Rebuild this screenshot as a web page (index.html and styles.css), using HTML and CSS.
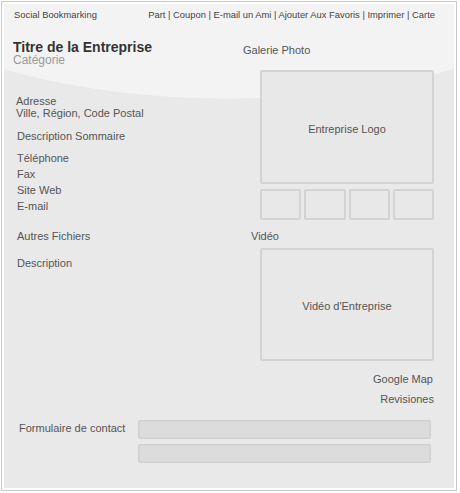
FILE: index.html
```html
<!DOCTYPE html>
<html lang="fr">
<head>
<meta charset="utf-8">
<title>Entreprise</title>
<link rel="stylesheet" href="styles.css">
</head>
<body>
<div class="frame">
  <div class="panel">
    <div class="topbar">
      <span class="social">Social Bookmarking</span>
      <span class="links">Part | Coupon | E-mail un Ami | Ajouter Aux Favoris | Imprimer | Carte</span>
    </div>
    <div class="main">
      <div class="left">
        <div class="title">Titre de la Entreprise</div>
        <div class="category">Catégorie</div>
        <div class="address">Adresse<br>Ville, Région, Code Postal</div>
        <div class="summary">Description Sommaire</div>
        <div class="contact">Téléphone<br>Fax<br>Site Web<br>E-mail</div>
        <div class="files">Autres Fichiers</div>
        <div class="desc">Description</div>
      </div>
      <div class="right">
        <div class="gallery-label">Galerie Photo</div>
        <div class="box logo">Entreprise Logo</div>
        <div class="thumbs">
          <div class="thumb"></div>
          <div class="thumb"></div>
          <div class="thumb"></div>
          <div class="thumb"></div>
        </div>
        <div class="video-label">Vidéo</div>
        <div class="box video">Vidéo d'Entreprise</div>
        <div class="map">Google Map</div>
        <div class="revisions">Revisiones</div>
      </div>
    </div>
    <div class="form">
      <div class="form-label">Formulaire de contact</div>
      <div class="fields">
        <div class="field"></div>
        <div class="field"></div>
      </div>
    </div>
  </div>
</div>
</body>
</html>
```

FILE: styles.css
```css
* { box-sizing: border-box; }
html, body { margin: 0; padding: 0; background: #fff; }
body {
  font-family: "Liberation Sans", Arial, sans-serif;
  color: #555;
  font-size: 11px;
  line-height: 16px;
}
.frame {
  margin: 1px 0 0 1px;
  width: 456px;
  border: 1px solid #c9c9c9;
  padding: 2px;
  background: #fff;
}
.panel {
  height: 484px;
  background-color: #e9e9e9;
  background-image: radial-gradient(400px 170px at 224px -75px, #f3f3f3 99.4%, #e9e9e9 100%);
  display: flex;
  flex-direction: column;
}
.topbar {
  display: flex;
  justify-content: space-between;
  padding: 5px 19px 0 10px;
  font-size: 9.4px;
  line-height: 12px;
  color: #444;
}
.main {
  display: grid;
  grid-template-columns: 1fr 211px;
}
.left { padding-left: 12px; }
.title {
  margin: 19px 0 0 -3px;
  font-size: 14px;
  line-height: 14px;
  font-weight: bold;
  color: #333;
}
.category {
  margin: 1px 0 0 -3px;
  font-size: 12px;
  line-height: 11px;
  color: #999;
}
.address { margin-top: 29px; line-height: 12px; }
.summary { margin: 9px 0 0 1px; }
.contact { margin: 6px 0 0 1px; }
.files { margin: 14px 0 0 1px; }
.desc { margin: 11px 0 0 1px; }

.right { padding-right: 20px; }
.gallery-label { margin-top: 21px; }
.box {
  margin-left: 17px;
  border: 2px solid #d3d3d3;
  border-radius: 2px;
  background: #e8e8e8;
  text-align: center;
}
.logo { margin-top: 12px; height: 114px; padding-top: 49px; }
.thumbs {
  margin: 5px 0 0 17px;
  display: grid;
  grid-template-columns: repeat(4, 1fr);
  gap: 3px;
}
.thumb {
  height: 31px;
  border: 2px solid #d3d3d3;
  border-radius: 2px;
  background: #e8e8e8;
}
.video-label { margin: 8px 0 0 8px; }
.video { margin-top: 4px; height: 113px; padding-top: 48px; }
.map { margin-top: 10px; text-align: right; padding-right: 1px; }
.revisions { margin-top: 4px; text-align: right; }

.form {
  margin-top: 13px;
  display: grid;
  grid-template-columns: 119px 1fr;
  padding: 0 23px 0 15px;
}
.fields { display: flex; flex-direction: column; gap: 5px; }
.field {
  height: 19px;
  border: 1px solid #d0d0d0;
  border-radius: 2px;
  background: #dcdcdc;
  box-shadow: inset 0 0 0 1px #d6d6d6;
}
```
